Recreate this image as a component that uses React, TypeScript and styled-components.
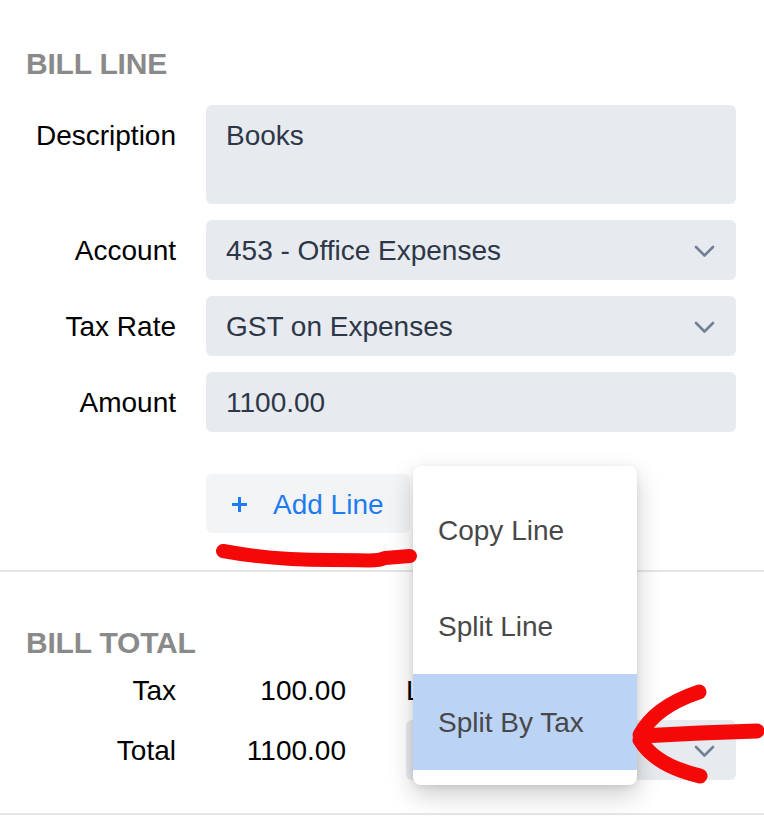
import React from "react";
import styled, { createGlobalStyle } from "styled-components";

const Global = createGlobalStyle`
  html, body { margin: 0; padding: 0; background: #ffffff; overflow: hidden; }
  body { font-family: "Liberation Sans", Arial, Helvetica, sans-serif; }
  * { box-sizing: border-box; }
`;

const Page = styled.div`
  position: relative;
  width: 764px;
  height: 816px;
  overflow: hidden;
  background: #ffffff;
`;

const Section = styled.section<{ $top: number; $bottom: number }>`
  padding: ${(p) => p.$top}px 28px ${(p) => p.$bottom}px 26px;
`;

const Heading = styled.h2`
  margin: 0;
  font-size: 30px;
  line-height: 30px;
  font-weight: 700;
  color: #8a8a8a;
  letter-spacing: -0.2px;
`;

const FormGrid = styled.div`
  margin-top: 26px;
  display: grid;
  grid-template-columns: 150px 530px;
  column-gap: 30px;
  row-gap: 16px;
  align-items: center;
`;

const Label = styled.div<{ $top?: boolean }>`
  font-size: 28px;
  line-height: 32px;
  color: #000000;
  text-align: right;
  align-self: ${(p) => (p.$top ? "start" : "center")};
  padding-top: ${(p) => (p.$top ? "15px" : "2px")};
`;

const Field = styled.div<{ $tall?: boolean }>`
  height: ${(p) => (p.$tall ? "99px" : "60px")};
  background: #e7eaee;
  border-radius: 6px;
  padding: ${(p) => (p.$tall ? "15px 20px 0" : "2px 21px 0 20px")};
  display: flex;
  align-items: ${(p) => (p.$tall ? "flex-start" : "center")};
  justify-content: space-between;
  font-size: 28px;
  line-height: 32px;
  color: #2d3748;
`;

const ActionRow = styled.div`
  position: relative;
  margin-top: 42px;
  padding-left: 180px;
  display: flex;
`;

const AddButton = styled.button`
  height: 59px;
  padding: 2px 26px 0 25px;
  border: none;
  border-radius: 6px;
  background: #f3f4f6;
  display: flex;
  align-items: center;
  gap: 25px;
  font-family: inherit;
  font-size: 28px;
  color: #1f7cf0;
  cursor: pointer;

  svg { flex-shrink: 0; display: block; }
`;

const Menu = styled.div`
  position: absolute;
  left: 387px;
  top: -8px;
  width: 224px;
  padding: 16px 0 15px;
  background: #ffffff;
  border-radius: 8px;
  box-shadow: 0 10px 26px rgba(0, 0, 0, 0.2), 0 2px 6px rgba(0, 0, 0, 0.08);
  z-index: 5;
`;

const MenuItem = styled.div<{ $active?: boolean }>`
  height: 96px;
  padding: 2px 0 0 25px;
  display: flex;
  align-items: center;
  font-size: 28px;
  color: #484848;
  background: ${(p) => (p.$active ? "#bbd3f4" : "transparent")};
`;

const Divider = styled.hr`
  margin: 0;
  border: none;
  height: 2px;
  background: #e6e6e6;
`;

const TotalsGrid = styled.div`
  margin-top: 2px;
  display: grid;
  grid-template-columns: 150px 170px 330px;
  grid-auto-rows: 60px;
  column-gap: 30px;
  align-items: center;
  font-size: 28px;
  line-height: 32px;
  color: #000000;
`;

const TotalLabel = styled.div`
  text-align: right;
  padding-top: 2px;
`;

const TotalValue = styled.div`
  text-align: right;
  padding: 2px 30px 0 0;
`;

const SideLabel = styled.div`
  color: #000000;
  white-space: nowrap;
  padding-top: 2px;
`;

const Annotations = styled.svg`
  position: absolute;
  left: 0;
  top: 0;
  pointer-events: none;
  z-index: 10;
`;

const Chevron = () => (
  <svg width="21" height="13" viewBox="0 0 21 13" fill="none">
    <path d="M2 2 L10.5 10.5 L19 2" stroke="#718096" strokeWidth="2.6" strokeLinecap="round" strokeLinejoin="round" />
  </svg>
);

const Plus = () => (
  <svg width="17" height="17" viewBox="0 0 17 17" fill="none">
    <path d="M8.5 1 V16 M1 8.5 H16" stroke="#1f7cf0" strokeWidth="3" />
  </svg>
);

export default function App() {
  return (
    <Page>
      <Global />
      <Section $top={49} $bottom={37}>
        <Heading>BILL LINE</Heading>
        <FormGrid>
          <Label $top>Description</Label>
          <Field $tall>Books</Field>
          <Label>Account</Label>
          <Field>
            <span>453 - Office Expenses</span>
            <Chevron />
          </Field>
          <Label>Tax Rate</Label>
          <Field>
            <span>GST on Expenses</span>
            <Chevron />
          </Field>
          <Label>Amount</Label>
          <Field>
            <span>1100.00</span>
          </Field>
        </FormGrid>
        <ActionRow>
          <AddButton>
            <Plus />
            <span>Add Line</span>
          </AddButton>
          <Menu>
            <MenuItem>Copy Line</MenuItem>
            <MenuItem>Split Line</MenuItem>
            <MenuItem $active>Split By Tax</MenuItem>
          </Menu>
        </ActionRow>
      </Section>
      <Divider />
      <Section $top={56} $bottom={33}>
        <Heading>BILL TOTAL</Heading>
        <TotalsGrid>
          <TotalLabel>Tax</TotalLabel>
          <TotalValue>100.00</TotalValue>
          <SideLabel>Line amounts are</SideLabel>
          <TotalLabel>Total</TotalLabel>
          <TotalValue>1100.00</TotalValue>
          <Field>
            <span>Tax Inclusive</span>
            <Chevron />
          </Field>
        </TotalsGrid>
      </Section>
      <Divider />
      <Annotations width="764" height="816" viewBox="0 0 764 816">
        <path
          d="M223 551 C 250 556, 290 560, 330 560 S 375 562, 385 558 L 410 556"
          stroke="#f50808"
          strokeWidth="14"
          strokeLinecap="round"
          strokeLinejoin="round"
          fill="none"
        />
        <path d="M641 736 L 700 733 L 757 731" stroke="#f50808" strokeWidth="15" strokeLinecap="round" fill="none" />
        <path d="M699 692 C 675 700, 652 712, 640 735" stroke="#f50808" strokeWidth="15" strokeLinecap="round" fill="none" />
        <path d="M640 740 C 652 760, 675 770, 700 776" stroke="#f50808" strokeWidth="15" strokeLinecap="round" fill="none" />
      </Annotations>
    </Page>
  );
}
